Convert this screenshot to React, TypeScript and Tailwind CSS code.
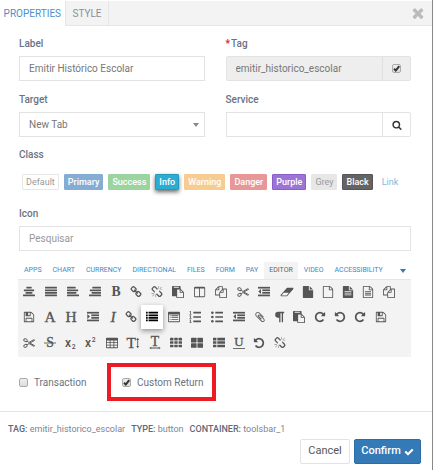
import React from "react";

type IconProps = { className?: string; children?: React.ReactNode };

/* Icon on the 1792-unit grid */
function Glyph({ d, className = "size-3", children }: IconProps & { d?: string }) {
  return (
    <svg viewBox="0 0 1792 1792" fill="currentColor" aria-hidden="true" className={`overflow-visible ${className}`}>
      {d && <path d={d} />}
      {children}
    </svg>
  );
}

/* Icon on a 14-unit grid */
function Grid14({ children }: IconProps) {
  return (
    <svg viewBox="0 0 14 14" fill="currentColor" aria-hidden="true" className="size-3 overflow-visible">
      {children}
    </svg>
  );
}

const D = {
  undo: "M1664 896q0 156-61 298t-164 245-245 164-298 61q-172 0-327-72.5t-264-204.5q-7-10-6.5-22.5t8.5-20.5l137-138q10-9 25-9 16 2 23 12 73 95 179 147t225 52q104 0 198.5-40.5t163.5-109.5 109.5-163.5 40.5-198.5-40.5-198.5-109.5-163.5-163.5-109.5-198.5-40.5q-98 0-188 35.5t-160 101.5l137 138q31 30 14 69-17 40-59 40h-448q-26 0-45-19t-19-45v-448q0-42 40-59 39-17 69 14l130 129q107-101 244.5-156.5t284.5-55.5q156 0 298 61t245 164 164 245 61 298z",
  check: "M1671 566q0 40-28 68l-724 724-136 136q-28 28-68 28t-68-28l-136-136-362-362q-28-28-28-68t28-68l136-136q28-28 68-28t68 28l294 295 656-657q28-28 68-28t68 28l136 136q28 28 28 68z",
  search: "M1216 832q0-185-131.5-316.5t-316.5-131.5-316.5 131.5-131.5 316.5 131.5 316.5 316.5 131.5 316.5-131.5 131.5-316.5zm512 832q0 52-38 90t-90 38q-54 0-90-38l-343-342q-179 124-399 124-143 0-273.5-55.5t-225-150-150-225-55.5-273.5 55.5-273.5 150-225 225-150 273.5-55.5 273.5 55.5 225 150 150 225 55.5 273.5q0 220-124 399l343 343q37 37 37 90z",
  times: "M1490 1322q0 40-28 68l-136 136q-28 28-68 28t-68-28l-294-294-294 294q-28 28-68 28t-68-28l-136-136q-28-28-28-68t28-68l294-294-294-294q-28-28-28-68t28-68l136-136q28-28 68-28t68 28l294 294 294-294q28-28 68-28t68 28l136 136q28 28 28 68t-28 68l-294 294 294 294q28 28 28 68z",
  fileO: "M1596 380q28 28 48 76t20 88v1152q0 40-28 68t-68 28h-1344q-40 0-68-28t-28-68v-1600q0-40 28-68t68-28h896q40 0 88 20t76 48zm-444-244v376h376q-10-29-22-41l-313-313q-12-12-41-22zm384 1528v-1024h-416q-40 0-68-28t-28-68v-416h-768v1536h1280z",
  file: "M1152 512v-472q22 14 36 28l408 408q14 14 28 36h-472zm-128 32q0 40 28 68t68 28h544v1056q0 40-28 68t-68 28h-1344q-40 0-68-28t-28-68v-1600q0-40 28-68t68-28h800v544z",
  copy: "M1696 384q40 0 68 28t28 68v1216q0 40-28 68t-68 28h-960q-40 0-68-28t-28-68v-288h-544q-40 0-68-28t-28-68v-672q0-40 20-88t48-76l408-408q28-28 76-48t88-20h416q40 0 68 28t28 68v328q68-40 128-40h416zm-544 213l-299 299h299v-299zm-640-384l-299 299h299v-299zm196 647l316-316v-416h-384v416q0 40-28 68t-68 28h-416v640h512v-256q0-40 20-88t48-76zm956 804v-1152h-384v416q0 40-28 68t-68 28h-416v640h896z",
  paste: "M768 1664h896v-640h-416q-40 0-68-28t-28-68v-416h-384v1152zm256-1440v-64q0-13-9.5-22.5t-22.5-9.5h-704q-13 0-22.5 9.5t-9.5 22.5v64q0 13 9.5 22.5t22.5 9.5h704q13 0 22.5-9.5t9.5-22.5zm256 672h299l-299-299v299zm512 128v672q0 40-28 68t-68 28h-960q-40 0-68-28t-28-68v-160h-544q-40 0-68-28t-28-68v-1344q0-40 28-68t68-28h1088q40 0 68 28t28 68v328q21 13 36 28l408 408q28 28 48 76t20 88z",
  save: "M512 1536h768v-384h-768v384zm896 0h128v-896q0-14-10-38.5t-20-34.5l-281-281q-10-10-34-20t-39-10v416q0 40-28 68t-68 28h-576q-40 0-68-28t-28-68v-416h-128v1280h128v-416q0-40 28-68t68-28h832q40 0 68 28t28 68v416zm-384-928v-320q0-13-9.5-22.5t-22.5-9.5h-192q-13 0-22.5 9.5t-9.5 22.5v320q0 13 9.5 22.5t22.5 9.5h192q13 0 22.5-9.5t9.5-22.5zm640 32v928q0 40-28 68t-68 28h-1344q-40 0-68-28t-28-68v-1344q0-40 28-68t68-28h928q40 0 88 20t76 48l280 280q28 28 48 76t20 88z",
  link: "M1520 1216q0-40-28-68l-208-208q-28-28-68-28-42 0-72 32 3 3 19 18.5t21.5 21.5 15 19 13 25.5 3.5 27.5q0 40-28 68t-68 28q-15 0-27.5-3.5t-25.5-13-19-15-21.5-21.5-18.5-19q-33 31-33 73 0 40 28 68l206 207q27 27 68 27 40 0 68-26l147-146q28-28 28-67zm-703-705q0-40-28-68l-206-207q-28-28-68-28-39 0-68 27l-147 146q-28 28-28 67 0 40 28 68l208 208q27 27 68 27 42 0 72-31-3-3-19-18.5t-21.5-21.5-15-19-13-25.5-3.5-27.5q0-40 28-68t68-28q15 0 27.5 3.5t25.5 13 19 15 21.5 21.5 18.5 19q33-31 33-73zm895 705q0 120-85 203l-147 146q-83 83-203 83-121 0-204-85l-206-207q-83-83-83-203 0-123 88-209l-88-88q-86 88-208 88-120 0-204-84l-208-208q-84-84-84-204t85-203l147-146q83-83 203-83 121 0 204 85l206 207q83 83 83 203 0 123-88 209l88 88q86-88 208-88 120 0 204 84l208 208q84 84 84 204z",
  unlink: "M503 1271l-256 256q-10 9-23 9-12 0-23-9-9-10-9-23t9-23l256-256q10-9 23-9t23 9q9 10 9 23t-9 23zm169 41v320q0 14-9 23t-23 9-23-9-9-23v-320q0-14 9-23t23-9 23 9 9 23zm-224-224q0 14-9 23t-23 9h-320q-14 0-23-9t-9-23 9-23 23-9h320q14 0 23 9t9 23zm1264 128q0 120-85 203l-147 146q-83 83-203 83-121 0-204-85l-334-335q-21-21-42-56l239-18 273 274q28 28 68 27.5t68-27.5l147-146q28-28 28-67 0-40-28-68l-274-275 18-239q35 21 56 42l336 336q84 86 84 204zm-617-724l-239 18-273-274q-28-28-68-28-39 0-68 27l-147 146q-28 28-28 67 0 40 28 68l274 274-18 240q-35-21-56-42l-336-336q-84-86-84-204 0-120 85-203l147-146q83-83 203-83 121 0 204 85l334 335q21 21 42 56zm633 84q0 14-9 23t-23 9h-320q-14 0-23-9t-9-23 9-23 23-9h320q14 0 23 9t9 23zm-544-544v320q0 14-9 23t-23 9-23-9-9-23v-320q0-14 9-23t23-9 23 9 9 23zm407 151l-256 256q-11 9-23 9t-23-9q-9-10-9-23t9-23l256-256q10-9 23-9t23 9q9 10 9 23t-9 23z",
  eraser: "M832 1408l336-384h-768l-336 384h768zm1013-1077q15 34 9.5 71.5t-30.5 65.5l-896 1024q-38 44-96 44h-768q-38 0-69.5-20.5t-47.5-54.5q-15-34-9.5-71.5t30.5-65.5l896-1024q38-44 96-44h768q38 0 69.5 20.5t47.5 54.5z",
  clip: "M1596 1385q0 117-79 196t-196 79q-135 0-235-100l-777-776q-113-115-113-271 0-159 110-270t269-111q158 0 273 113l605 606q10 10 10 22 0 16-30.5 46.5t-46.5 30.5q-13 0-23-10l-606-607q-79-77-181-77-106 0-179 75t-73 181q0 105 76 181l776 777q63 63 145 63 64 0 106-42t42-106q0-82-63-145l-581-581q-26-24-60-24-29 0-48 19t-19 48q0 32 25 59l410 410q10 10 10 22 0 16-31 47t-47 31q-12 0-22-10l-410-410q-63-61-63-149 0-82 57-139t139-57q88 0 149 63l581 581q100 98 100 235z",
  columns: "M160 1536h608v-1152h-640v1120q0 13 9.5 22.5t22.5 9.5zm1376-32v-1120h-640v1152h608q13 0 22.5-9.5t9.5-22.5zm128-1216v1216q0 66-47 113t-113 47h-1344q-66 0-113-47t-47-113v-1216q0-66 47-113t113-47h1344q66 0 113 47t47 113z",
};

function Bars({ rows }: { rows: [number, number][] }) {
  return (
    <Grid14>
      {rows.map(([x, w], i) => (
        <rect key={i} x={x} y={1 + i * 3} width={w} height="2" rx="0.4" />
      ))}
    </Grid14>
  );
}

function Cells({ xs, ys, w, h }: { xs: number[]; ys: number[]; w: number; h: number }) {
  return (
    <Grid14>
      {ys.map((y) => xs.map((x) => <rect key={`${x}-${y}`} x={x} y={y} width={w} height={h} rx="0.6" />))}
    </Grid14>
  );
}

function ListRows({ marker }: { marker: "dot" | "number" }) {
  return (
    <Grid14>
      {[2, 7, 12].map((y) => (
        <g key={y}>
          {marker === "dot" && <circle cx="1.6" cy={y} r="1.5" />}
          {marker === "number" && <path d={`M1 ${y - 2}h1.2v3.4h1v.7H.4v-.7h.9v-2.4H.6z`} />}
          <rect x="5" y={y - 1} width="9" height="2" rx="0.3" />
        </g>
      ))}
    </Grid14>
  );
}

function DentIcon({ out = false }: { out?: boolean }) {
  return (
    <Grid14>
      <rect y="1" width="14" height="2" />
      <rect x="5" y="4" width="9" height="2" />
      <rect x="5" y="7" width="9" height="2" />
      <rect y="10" width="14" height="2" />
      <path d={out ? "M3.5 3.6v5.8L.4 6.5z" : "M.4 3.6v5.8l3.1-2.9z"} />
    </Grid14>
  );
}

const Cut = () => (
  <Grid14>
    <g fill="none" stroke="currentColor" strokeWidth="1.1">
      <ellipse cx="2.9" cy="3.7" rx="2.1" ry="1.6" transform="rotate(25 2.9 3.7)" />
      <ellipse cx="2.9" cy="10.3" rx="2.1" ry="1.6" transform="rotate(-25 2.9 10.3)" />
      <path d="M4.8 4.9 7 6.4l5.4-3.2 1.2.6L8 7l5.6 3.2-1.2.6L7 7.6 4.8 9.1" />
    </g>
  </Grid14>
);

const serif = "[font-family:'Liberation_Serif',serif]";

function Letter({ c, look = "", size = 15, x = 7, y = 12, children }: { c: string; look?: string; size?: number; x?: number; y?: number; children?: React.ReactNode }) {
  return (
    <Grid14>
      <text x={x} y={y} fontSize={size} textAnchor="middle" className={`${serif} ${look}`}>{c}</text>
      {children}
    </Grid14>
  );
}

function Script({ sup = false }: { sup?: boolean }) {
  return (
    <Grid14>
      <text x="0" y="12" fontSize="14" className="font-medium">x</text>
      <text x="8" y={sup ? 6 : 14} fontSize="8" className="font-medium">2</text>
    </Grid14>
  );
}

const icons = {
  "align-center": <Bars rows={[[4, 6], [1, 12], [3, 8], [0, 14]]} />,
  "align-justify": <Bars rows={[[0, 14], [0, 14], [0, 14], [0, 14]]} />,
  "align-left": <Bars rows={[[0, 10], [0, 13], [0, 11], [0, 14]]} />,
  "align-right": <Bars rows={[[4, 10], [1, 13], [3, 11], [0, 14]]} />,
  bold: <Letter c="B" look="font-bold" size={16} />,
  link: <Glyph d={D.link} />,
  unlink: <Glyph d={D.unlink} />,
  paste: <Glyph d={D.paste} />,
  columns: <Glyph d={D.columns} />,
  copy: <Glyph d={D.copy} />,
  cut: <Cut />,
  outdent: <DentIcon out />,
  indent: <DentIcon />,
  eraser: <Glyph d={D.eraser} />,
  file: <Glyph d={D.file} />,
  "file-outline": <Glyph d={D.fileO} />,
  "file-text": (
    <Glyph d={D.file}>
      <path className="fill-[#f3f3f3]" d="M384 768h1024v110H384zM384 1024h1024v110H384zM384 1280h1024v110H384z" />
    </Glyph>
  ),
  "file-text-outline": (
    <Glyph d={D.fileO}>
      <path d="M448 768h896v128H448zM448 1024h896v128H448zM448 1280h896v128H448z" />
    </Glyph>
  ),
  save: <Glyph d={D.save} />,
  font: <Letter c="A" look="stroke-current stroke-[0.4px]" size={18} y={13} />,
  header: <Letter c="H" look="stroke-current stroke-[0.4px]" size={18} y={13} />,
  italic: <Letter c="I" look="italic stroke-current stroke-[0.4px]" size={18} y={13} />,
  list: (
    <Grid14>
      {[1, 4, 7, 10].map((y) => (
        <path key={y} d={`M0 ${y}h2v2H0zM3 ${y}h11v2H3z`} />
      ))}
    </Grid14>
  ),
  "list-alt": (
    <Grid14>
      <path fillRule="evenodd" d="M1 1h12a1 1 0 0 1 1 1v10a1 1 0 0 1-1 1H1a1 1 0 0 1-1-1V2a1 1 0 0 1 1-1zm0 3v8h12V4z" />
      <path d="M2 5h1v1H2zM4 5h8v1H4zM2 7.3h1v1H2zM4 7.3h8v1H4zM2 9.6h1v1H2zM4 9.6h8v1H4z" />
    </Grid14>
  ),
  "list-ol": <ListRows marker="number" />,
  "list-ul": <ListRows marker="dot" />,
  clip: <Glyph d={D.clip} />,
  paragraph: (
    <Grid14>
      <path d="M6 1h7v1.6h-1.3V13h-1.5V2.6H8.7V13H7.2V8H6a3.5 3.5 0 0 1 0-7z" />
    </Grid14>
  ),
  undo: <Glyph d={D.undo} />,
  redo: <Glyph d={D.undo} className="size-3 -scale-x-100" />,
  strike: (
    <Letter c="S" size={16} look="stroke-current stroke-[0.4px]">
      <rect x="0" y="6.5" width="14" height="1" />
    </Letter>
  ),
  sub: <Script />,
  sup: <Script sup />,
  table: (
    <Grid14>
      <path fillRule="evenodd" d="M1 1h12a1 1 0 0 1 1 1v10a1 1 0 0 1-1 1H1a1 1 0 0 1-1-1V2a1 1 0 0 1 1-1zm0 3v2h3.3V4zm4.3 0v2h3.4V4zm4.4 0v2H13V4zM1 7v2h3.3V7zm4.3 0v2h3.4V7zm4.4 0v2H13V7zM1 10v2h3.3v-2zm4.3 0v2h3.4v-2zm4.4 0v2H13v-2z" />
    </Grid14>
  ),
  "text-height": (
    <Letter c="T" size={18} x={5} y={13} look="stroke-current stroke-[0.4px]">
      <path d="M12.5 1l1.7 2.4h-1.2v7.2h1.2L12.5 13l-1.7-2.4H12V3.4h-1.2z" />
    </Letter>
  ),
  "text-width": (
    <Letter c="T" size={16} y={11} look="stroke-current stroke-[0.4px]">
      <path d="M.4 12.8l2.2-1.5v1h8.8v-1l2.2 1.5-2.2 1.5v-1H2.6v1z" />
    </Letter>
  ),
  th: <Cells xs={[0, 5, 10]} ys={[1, 5, 9]} w={4} h={3} />,
  "th-large": <Cells xs={[0, 7.5]} ys={[1, 7.3]} w={6.5} h={5.3} />,
  "th-list": (
    <Grid14>
      {[1, 5, 9].map((y) => (
        <path key={y} d={`M0 ${y}h4v3H0zM5 ${y}h9v3H5z`} />
      ))}
    </Grid14>
  ),
  underline: (
    <Letter c="U" size={15} y={11} look="stroke-current stroke-[0.4px]">
      <rect x="0" y="13" width="14" height="1" />
    </Letter>
  ),
};

type IconName = keyof typeof icons;

const iconRows: IconName[][] = [
  ["align-center", "align-justify", "align-left", "align-right", "bold", "link", "unlink", "paste", "columns", "copy", "cut", "outdent", "eraser", "file", "file-outline", "file-text", "file-text-outline", "copy"],
  ["save", "font", "header", "indent", "italic", "link", "list", "list-alt", "list-ol", "list-ul", "outdent", "clip", "paragraph", "paste", "redo", "undo", "redo", "save"],
  ["cut", "strike", "sub", "sup", "table", "text-height", "text-width", "th", "th-large", "th-list", "underline", "undo", "unlink"],
];

/* Cell widths follow each glyph's own advance */
const narrow = new Set<IconName>(["bold", "link", "file", "file-outline", "file-text", "file-text-outline", "sub", "sup", "underline", "undo", "redo"]);
const medium = new Set<IconName>(["unlink", "columns", "cut", "save", "font", "list-alt", "table", "text-width", "th", "th-list"]);

function cellWidth(name: IconName) {
  if (name === "italic") return "w-[17px]";
  if (name === "clip" || name === "paragraph") return "w-[19px]";
  if (narrow.has(name)) return "w-5";
  if (medium.has(name)) return "w-[21px]";
  if (name === "eraser") return "w-[23px]";
  return "w-[22px]";
}

const classes = [
  ["Default", "border-[#e8e8e8] bg-white text-[#999]"],
  ["Primary", "border-[#85add4] bg-[#85add4] font-medium text-white"],
  ["Success", "border-[#9bd49e] bg-[#9bd49e] font-medium text-white"],
  ["Info", "border-[#2499bb] bg-[#2bacd3] font-medium text-white shadow-[0_2px_4px_rgba(0,0,0,0.6)]"],
  ["Warning", "border-[#f7cc90] bg-[#f7cc90] font-medium text-white"],
  ["Danger", "border-[#e89696] bg-[#e89696] font-medium text-white"],
  ["Purple", "border-[#8a5fc8] bg-[#9c74d6] font-medium text-white"],
  ["Grey", "border-[#e7e7e7] bg-[#e7e7e7] text-[#999]"],
  ["Black", "border-[#555] bg-[#646464] font-medium text-white"],
  ["Link", "border-transparent text-[#85b5dd]"],
];

const tabs = ["APPS", "CHART", "CURRENCY", "DIRECTIONAL", "FILES", "FORM", "PAY", "EDITOR", "VIDEO", "ACCESSIBILITY"];

const labelCls = "block h-4 text-[10px] leading-4 font-medium text-[#6b7383]";
const boxCls = "block h-[25px] w-full min-w-0 border border-[#e3e3e3] bg-white px-[9px] text-[10px] text-[#777] outline-none";

function Tick({ id, checked = false, label }: { id: string; checked?: boolean; label?: string }) {
  return (
    <span className="relative flex size-[9px]">
      <input
        id={id}
        type="checkbox"
        defaultChecked={checked}
        aria-label={label}
        className="peer size-[9px] appearance-none rounded-[2px] border border-[#aaa] bg-linear-to-b from-[#eee] to-[#ddd]"
      />
      <svg viewBox="0 0 9 9" aria-hidden="true" className="pointer-events-none absolute inset-0 hidden size-[9px] fill-none stroke-[#333] stroke-2 peer-checked:block">
        <path d="M2 4.8 3.8 6.6 7.2 2.2" />
      </svg>
    </span>
  );
}

export default function App() {
  return (
    <div className="mr-px flex min-h-screen flex-col border-r border-[#888] bg-white font-['Roboto',sans-serif] text-[#555]">
      <header className="mt-px flex h-[25px] items-stretch border-b border-[#e6e6e6] bg-[#f3f3f3] text-[10px]">
        <button className="-mb-px w-[66px] border-r border-[#e6e6e6] bg-white pr-1 text-right text-[#4a90cc]">PROPERTIES</button>
        <button className="w-[43px] border-r border-[#e6e6e6] text-[#888f99]">STYLE</button>
        <button aria-label="Close" className="mr-1.5 ml-auto flex items-center text-[#bbb]">
          <Glyph d={D.times} className="size-4" />
        </button>
      </header>

      <main className="flex flex-col pt-[10px] pr-[21px] pl-[19px]">
        <div className="grid grid-cols-2 gap-x-[21px] gap-y-[11px]">
          <div>
            <label htmlFor="label" className={`${labelCls} mb-1`}>Label</label>
            <input id="label" className={boxCls} defaultValue="Emitir Histórico Escolar" />
          </div>
          <div>
            <label htmlFor="tag" className={`${labelCls} mb-1`}>
              <span className="mr-px font-bold text-[#e02020]">*</span>Tag
            </label>
            <div className="flex h-[25px] overflow-hidden rounded-[2px] border border-[#e3e3e3] bg-[#eee]">
              <input id="tag" readOnly className="min-w-0 flex-1 border-r border-[#e0e0e0] px-[9px] text-[10px] text-[#777] outline-none" defaultValue="emitir_historico_escolar" />
              <span className="flex w-[27px] items-center justify-center">
                <Tick id="tag-auto" checked label="Automatic tag" />
              </span>
            </div>
          </div>
          <div>
            <label htmlFor="target" className={`${labelCls} mb-1`}>Target</label>
            <div className="relative">
              <select id="target" className={`${boxCls} appearance-none`}>
                <option>New Tab</option>
              </select>
              <svg viewBox="0 0 6 4" aria-hidden="true" className="pointer-events-none absolute top-[11px] right-[6px] h-1 w-[6px] fill-[#888]">
                <path d="M0 0h6L3 4z" />
              </svg>
            </div>
          </div>
          <div>
            <label htmlFor="service" className={`${labelCls} mb-1`}>Service</label>
            <div className="flex">
              <input id="service" className={boxCls} />
              <button aria-label="Search service" className="-ml-px flex h-[25px] w-[29px] shrink-0 items-center justify-center rounded-r-[2px] border border-[#e3e3e3] text-[#333]">
                <Glyph d={D.search} className="size-[10px]" />
              </button>
            </div>
          </div>
        </div>

        <h2 className={`${labelCls} mt-[10px]`}>Class</h2>
        <div className="mt-[11px] flex gap-[5px] pl-[3px]">
          {classes.map(([name, look]) => (
            <button key={name} className={`h-4 rounded-[1px] border px-[3px] text-[9px] leading-[14px] ${look}`}>{name}</button>
          ))}
        </div>

        <label htmlFor="icon" className={`${labelCls} mt-4`}>Icon</label>
        <input id="icon" placeholder="Pesquisar" className={`${boxCls} mt-1 placeholder:text-[#999]`} />

        <nav className="mt-[11px] flex h-[17px] items-stretch gap-px text-[7px]">
          {tabs.map((t) => (
            <button key={t} className={`px-[5px] ${t === "EDITOR" ? "bg-[#f3f3f3] text-[#666]" : "text-[#3b88c8]"}`}>{t}</button>
          ))}
          <button aria-label="More categories" className="mr-[5px] ml-auto text-[#337ab7]">
            <svg viewBox="0 0 6 4" aria-hidden="true" className="h-1 w-[6px] fill-current">
              <path d="M0 0h6L3 4z" />
            </svg>
          </button>
        </nav>
        <div className="-ml-px border-t border-[#e6e6e6] bg-[#f3f3f3] pb-px">
          {iconRows.map((row, r) => (
            <div key={r} className="flex h-[26px] items-center first:h-6">
              {row.map((name, i) => (
                <button
                  key={i}
                  aria-label={name}
                  className={`flex h-6 shrink-0 items-center justify-center ${cellWidth(name)} ${name === "list" ? "bg-white text-black shadow-[0_2px_5px_rgba(0,0,0,0.4)]" : ""}`}
                >
                  {icons[name]}
                </button>
              ))}
            </div>
          ))}
        </div>

        <div className="mt-[6px] flex items-center text-[10px] text-[#6b7480]">
          <label className="flex w-[88px] items-center gap-[6px]">
            <Tick id="transaction" />
            Transaction
          </label>
          <label className="flex h-[38px] items-center gap-[6px] border-4 border-[#ed1c24] pr-[9px] pl-[11px]">
            <Tick id="custom-return" checked />
            Custom Return
          </label>
        </div>
      </main>

      <footer className="mt-[10px] border-t border-[#e3e3e3] pt-[9px] pr-[11px] pl-2">
        <p className="flex gap-[6px] text-[9px] leading-4 text-[#7d8592]">
          <span><b className="font-medium text-[#5f6878]">TAG:</b> emitir_historico_escolar</span>
          <span><b className="font-medium text-[#5f6878]">TYPE:</b> button</span>
          <span><b className="font-medium text-[#5f6878]">CONTAINER:</b> toolsbar_1</span>
        </p>
        <div className="mt-[2px] flex justify-end gap-1">
          <button className="h-[25px] w-[50px] rounded-[2px] border border-[#e3e3e3] text-[11px]">Cancel</button>
          <button className="flex h-[25px] w-[67px] items-center justify-center gap-[3px] rounded-[2px] border border-[#2e6da4] bg-[#337ab7] text-[11px] font-medium text-white">
            Confirm
            <Glyph d={D.check} className="size-[10px]" />
          </button>
        </div>
      </footer>
    </div>
  );
}
